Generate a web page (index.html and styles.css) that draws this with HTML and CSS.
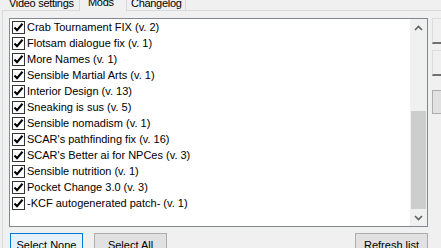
FILE: index.html
```html
<!DOCTYPE html>
<html lang="en">
<head>
  <meta charset="UTF-8" />
  <title>Mods</title>
  <link rel="stylesheet" href="styles.css">
</head>
<body>
  <div class="tabs">
    <div class="tab tab-first">Video settings</div>
    <div class="tab active">Mods</div>
    <div class="tab tab-last">Changelog</div>
  </div>

  <div class="panel">
    <div class="main">
      <div class="listbox">
        <ul class="mod-list">
          <li><span class="check"></span>Crab Tournament FIX (v. 2)</li>
          <li><span class="check"></span>Flotsam dialogue fix (v. 1)</li>
          <li><span class="check"></span>More Names (v. 1)</li>
          <li><span class="check"></span>Sensible Martial Arts (v. 1)</li>
          <li><span class="check"></span>Interior Design (v. 13)</li>
          <li><span class="check"></span>Sneaking is sus (v. 5)</li>
          <li><span class="check"></span>Sensible nomadism (v. 1)</li>
          <li><span class="check"></span>SCAR's pathfinding fix (v. 16)</li>
          <li><span class="check"></span>SCAR's Better ai for NPCes (v. 3)</li>
          <li><span class="check"></span>Sensible nutrition (v. 1)</li>
          <li><span class="check"></span>Pocket Change 3.0 (v. 3)</li>
          <li><span class="check"></span>-KCF autogenerated patch- (v. 1)</li>
        </ul>
        <div class="scrollbar">
          <div class="arrow">
            <svg width="9" height="6" viewBox="0 0 9 6"><path d="M1 5 L4.5 1.5 L8 5" fill="none" stroke="#606060" stroke-width="1.6"/></svg>
          </div>
          <div class="track"></div>
          <div class="thumb"></div>
          <div class="arrow">
            <svg width="9" height="6" viewBox="0 0 9 6"><path d="M1 1 L4.5 4.5 L8 1" fill="none" stroke="#606060" stroke-width="1.6"/></svg>
          </div>
        </div>
      </div>

      <div class="button-row">
        <div class="button-group">
          <button class="btn focused">Select None</button>
          <button class="btn">Select All</button>
        </div>
        <button class="btn">Refresh list</button>
      </div>
    </div>

    <div class="side">
      <div class="side-btn"></div>
      <div class="side-btn"></div>
      <div class="btn side-plain"></div>
    </div>
  </div>
</body>
</html>
```

FILE: styles.css
```css
* {
  box-sizing: border-box;
  margin: 0;
  padding: 0;
}
body {
  font-family: "Liberation Sans", Arial, sans-serif;
  font-size: 11px;
  color: #000;
  background: #f0f0f0;
  width: 441px;
  height: 248px;
  overflow: hidden;
}
.tabs {
  display: flex;
  height: 10px;
  align-items: flex-end;
  position: relative;
  z-index: 2;
}
.tab {
  flex-shrink: 0;
  height: 16px;
  line-height: 17px;
  font-size: 11px;
  letter-spacing: -0.3px;
  border: 1px solid #d9d9d9;
  border-bottom: none;
  background: #f0f0f0;
  margin-left: -1px;
  white-space: nowrap;
  overflow: hidden;
}
.tab-first {
  margin-left: -2px;
  width: 82px;
  padding-left: 10px;
}
.tab.active {
  height: 18px;
  line-height: 16px;
  margin-bottom: -1px;
  width: 48px;
  padding-left: 8px;
}
.tab-last {
  width: 60px;
  padding-left: 4px;
}
.panel {
  display: flex;
  gap: 4px;
  margin-left: 2px;
  border-left: 1px solid #d9d9d9;
  border-top: 1px solid #d9d9d9;
  padding: 7px 0 0 6px;
}
.main {
  width: 419px;
  flex-shrink: 0;
}
.listbox {
  display: flex;
  height: 209px;
  border: 1px solid #828790;
  background: #fff;
}
.mod-list {
  list-style: none;
  flex: 1;
  padding-left: 2px;
}
.mod-list li {
  display: flex;
  align-items: center;
  height: 16px;
  white-space: nowrap;
}
.check {
  width: 13px;
  height: 13px;
  margin-right: 2px;
  border: 1px solid #333;
  background: #fff url("data:image/svg+xml,%3Csvg xmlns='http://www.w3.org/2000/svg' width='11' height='11' viewBox='0 0 11 11'%3E%3Cpath d='M1.5 5.5 L4 8.2 L9.5 1.8' fill='none' stroke='%23000' stroke-width='2.1'/%3E%3C/svg%3E") no-repeat center;
  flex-shrink: 0;
}
.scrollbar {
  width: 17px;
  display: flex;
  flex-direction: column;
  background: #f0f0f0;
}
.arrow {
  height: 17px;
  display: flex;
  align-items: center;
  justify-content: center;
}
.track {
  height: 75px;
}
.thumb {
  height: 98px;
  margin: 0 1px;
  background: #cdcdcd;
}
.button-row {
  display: flex;
  justify-content: space-between;
  margin-top: 6px;
}
.button-group {
  display: flex;
  gap: 11px;
  padding-left: 1px;
}
.btn {
  width: 73px;
  height: 23px;
  font-family: inherit;
  font-size: 11px;
  color: #000;
  background: #e1e1e1;
  border: 1px solid #adadad;
}
.btn.focused {
  border-color: #0078d7;
  background: #e5f1fb;
}
.side {
  display: flex;
  flex-direction: column;
}
.side-btn {
  width: 80px;
  height: 26px;
  border-left: 1px solid #dcdcdc;
  border-top: 1px solid #dcdcdc;
  border-bottom: 2px solid #6f6f6f;
  background: #f0f0f0;
  margin-bottom: 6px;
}
.side-plain {
  width: 80px;
  height: 24px;
  margin-top: 8px;
}
```
